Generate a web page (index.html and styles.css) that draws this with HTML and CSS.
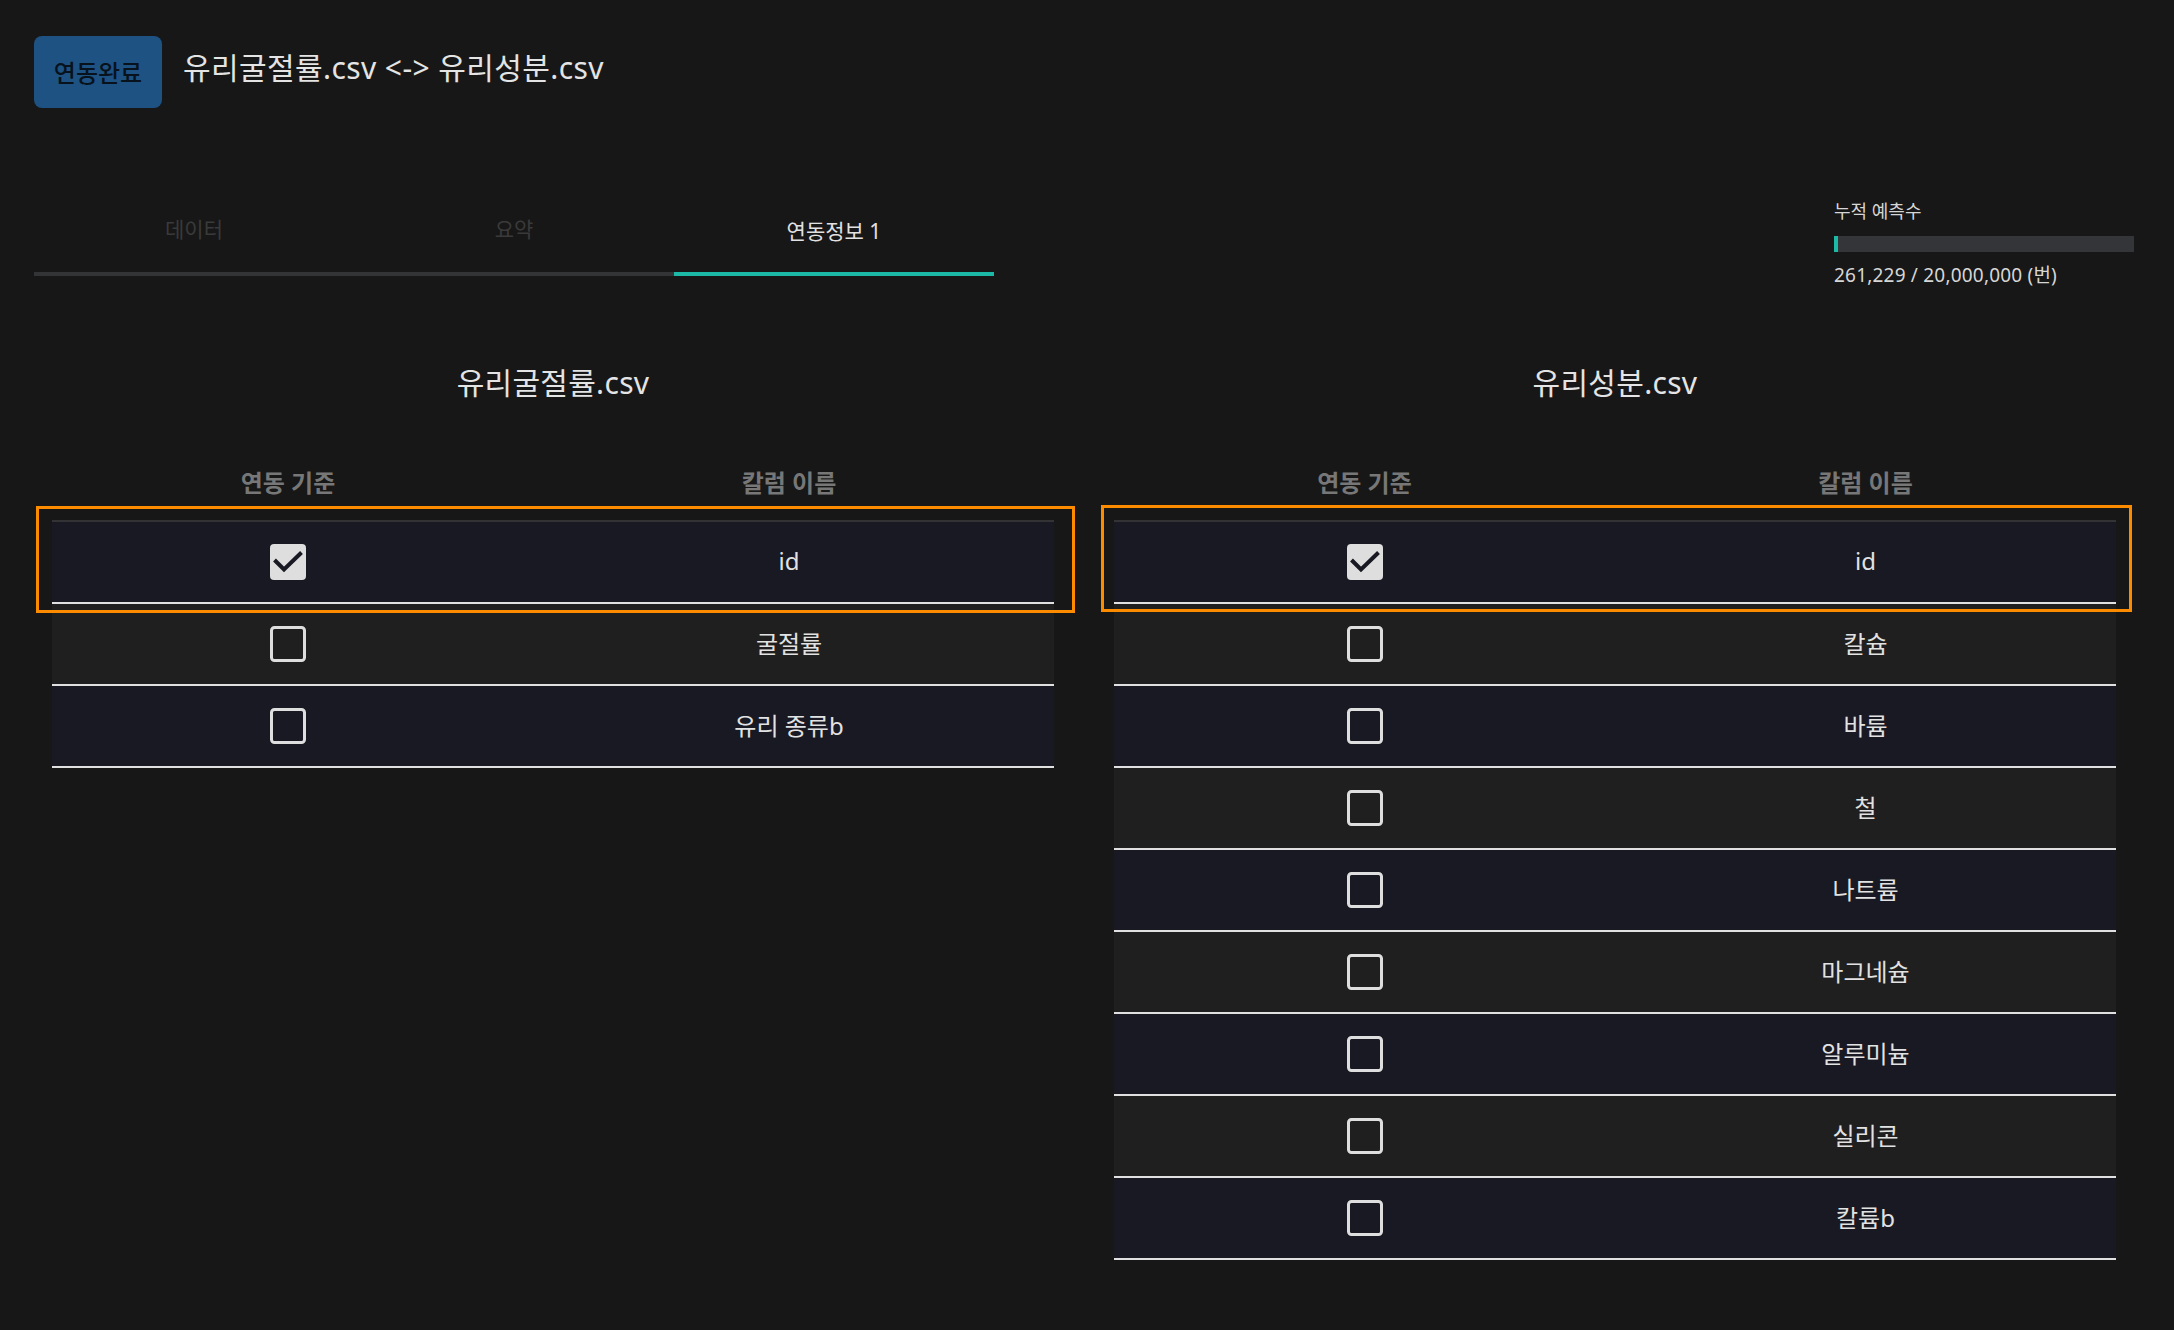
FILE: index.html
```html
<!DOCTYPE html>
<html lang="ko">
<head>
<meta charset="utf-8">
<title>연동정보</title>
<link rel="stylesheet" href="styles.css">
</head>
<body>
<header class="header">
  <div class="badge">연동완료</div>
  <div class="header-title">유리굴절률.csv &lt;-&gt; 유리성분.csv</div>
</header>

<div class="toolbar">
  <nav class="tabs">
    <div class="tab">데이터</div>
    <div class="tab">요약</div>
    <div class="tab tab--active">연동정보 1</div>
  </nav>
  <div class="stats">
    <div class="stats-label">누적 예측수</div>
    <div class="stats-bar"><div class="stats-fill" style="width:1.31%"></div></div>
    <div class="stats-value">261,229 / 20,000,000 (번)</div>
  </div>
</div>

<main class="panels">
  <section class="panel panel--left">
    <h2 class="panel-title">유리굴절률.csv</h2>
    <div class="grid head">
      <div class="cell">연동 기준</div>
      <div class="cell">칼럼 이름</div>
    </div>
    <div class="table">
      <div class="highlight"></div>
      <div class="grid row row--first">
        <div class="cell"><svg class="cb" viewBox="0 0 36 36"><rect x="0" y="0" width="36" height="36" rx="4" fill="#dedede"/><polyline points="4.5,16 14,25.5 31.5,8.5" fill="none" stroke="#181922" stroke-width="4"/></svg></div>
        <div class="cell txt">id</div>
      </div>
      <div class="grid row">
        <div class="cell"><svg class="cb" viewBox="0 0 36 36"><rect x="1.5" y="1.5" width="33" height="33" rx="3" fill="none" stroke="#dedede" stroke-width="3"/></svg></div>
        <div class="cell txt">굴절률</div>
      </div>
      <div class="grid row">
        <div class="cell"><svg class="cb" viewBox="0 0 36 36"><rect x="1.5" y="1.5" width="33" height="33" rx="3" fill="none" stroke="#dedede" stroke-width="3"/></svg></div>
        <div class="cell txt">유리 종류b</div>
      </div>
    </div>
  </section>

  <section class="panel panel--right">
    <h2 class="panel-title">유리성분.csv</h2>
    <div class="grid head">
      <div class="cell">연동 기준</div>
      <div class="cell">칼럼 이름</div>
    </div>
    <div class="table">
      <div class="highlight"></div>
      <div class="grid row row--first">
        <div class="cell"><svg class="cb" viewBox="0 0 36 36"><rect x="0" y="0" width="36" height="36" rx="4" fill="#dedede"/><polyline points="4.5,16 14,25.5 31.5,8.5" fill="none" stroke="#181922" stroke-width="4"/></svg></div>
        <div class="cell txt">id</div>
      </div>
      <div class="grid row">
        <div class="cell"><svg class="cb" viewBox="0 0 36 36"><rect x="1.5" y="1.5" width="33" height="33" rx="3" fill="none" stroke="#dedede" stroke-width="3"/></svg></div>
        <div class="cell txt">칼슘</div>
      </div>
      <div class="grid row">
        <div class="cell"><svg class="cb" viewBox="0 0 36 36"><rect x="1.5" y="1.5" width="33" height="33" rx="3" fill="none" stroke="#dedede" stroke-width="3"/></svg></div>
        <div class="cell txt">바륨</div>
      </div>
      <div class="grid row">
        <div class="cell"><svg class="cb" viewBox="0 0 36 36"><rect x="1.5" y="1.5" width="33" height="33" rx="3" fill="none" stroke="#dedede" stroke-width="3"/></svg></div>
        <div class="cell txt">철</div>
      </div>
      <div class="grid row">
        <div class="cell"><svg class="cb" viewBox="0 0 36 36"><rect x="1.5" y="1.5" width="33" height="33" rx="3" fill="none" stroke="#dedede" stroke-width="3"/></svg></div>
        <div class="cell txt">나트륨</div>
      </div>
      <div class="grid row">
        <div class="cell"><svg class="cb" viewBox="0 0 36 36"><rect x="1.5" y="1.5" width="33" height="33" rx="3" fill="none" stroke="#dedede" stroke-width="3"/></svg></div>
        <div class="cell txt">마그네슘</div>
      </div>
      <div class="grid row">
        <div class="cell"><svg class="cb" viewBox="0 0 36 36"><rect x="1.5" y="1.5" width="33" height="33" rx="3" fill="none" stroke="#dedede" stroke-width="3"/></svg></div>
        <div class="cell txt">알루미늄</div>
      </div>
      <div class="grid row">
        <div class="cell"><svg class="cb" viewBox="0 0 36 36"><rect x="1.5" y="1.5" width="33" height="33" rx="3" fill="none" stroke="#dedede" stroke-width="3"/></svg></div>
        <div class="cell txt">실리콘</div>
      </div>
      <div class="grid row">
        <div class="cell"><svg class="cb" viewBox="0 0 36 36"><rect x="1.5" y="1.5" width="33" height="33" rx="3" fill="none" stroke="#dedede" stroke-width="3"/></svg></div>
        <div class="cell txt">칼륨b</div>
      </div>
    </div>
  </section>
</main>
</body>
</html>
```

FILE: styles.css
```css
* { box-sizing: border-box; }

html, body {
  margin: 0;
  padding: 0;
  background: #171717;
  color: #e2e2e2;
  font-family: "Noto Sans", "Noto Sans CJK KR", sans-serif;
}

body {
  width: 2174px;
  min-height: 1330px;
}

/* Header */
.header {
  display: flex;
  align-items: center;
  gap: 21px;
  padding: 36px 0 0 34px;
}

.badge {
  width: 128px;
  height: 72px;
  border-radius: 8px;
  background: #1d5282;
  color: #08121c;
  font-size: 24px;
  font-weight: 500;
  display: flex;
  align-items: center;
  justify-content: center;
  padding-bottom: 2px;
}

.header-title {
  font-size: 30px;
  letter-spacing: 0.4px;
  color: #e4e4e4;
  line-height: 40px;
  padding-bottom: 9px;
}

/* Toolbar: tabs + stats */
.toolbar {
  display: flex;
  justify-content: space-between;
  align-items: flex-start;
  height: 100px;
  margin-top: 84px;
  padding: 0 40px 0 34px;
}

.tabs {
  display: flex;
  width: 960px;
  border-bottom: 4px solid #333436;
}

.tab {
  flex: 1;
  height: 80px;
  margin-bottom: -4px;
  border-bottom: 4px solid transparent;
  display: flex;
  align-items: center;
  justify-content: center;
  padding-bottom: 4px;
  font-size: 21px;
  color: #3a3a3a;
}

.tab--active {
  color: #e2e2e2;
  border-bottom-color: #1bb9a6;
  height: 84px;
}

.stats {
  width: 300px;
  padding-top: 7px;
  color: #d6d6d6;
}

.stats-label {
  font-size: 18px;
  line-height: 24px;
}

.stats-bar {
  margin-top: 13px;
  height: 16px;
  background: #343538;
}

.stats-fill {
  height: 100%;
  background: #1bb9a6;
}

.stats-value {
  margin-top: 11px;
  font-size: 19px;
  letter-spacing: 0.2px;
  line-height: 24px;
}

/* Panels */
.panels {
  display: flex;
  gap: 60px;
  padding: 0 58px 0 52px;
}

.panel {
  width: 1002px;
}

.panel-title {
  margin: 71px 0 0;
  font-size: 30px;
  font-weight: 400;
  letter-spacing: 0.3px;
  line-height: 40px;
  text-align: center;
  color: #e4e4e4;
}

.grid {
  display: grid;
  grid-template-columns: 1fr 1fr;
}

.panel--left .grid {
  grid-template-columns: 472px 1fr;
}

.cell {
  display: flex;
  align-items: center;
  justify-content: center;
}

.head {
  margin-top: 60px;
  height: 40px;
  padding-bottom: 3px;
  font-size: 24px;
  font-weight: 700;
  color: #777;
}

.table {
  position: relative;
  margin-top: 17px;
  border-top: 2px solid #333336;
}

.row {
  height: 82px;
  border-bottom: 2px solid #e0e0e0;
  font-size: 24px;
  color: #e2e2e2;
  background: #1f1f1f;
}

.row:nth-child(even) {
  background: #181922;
}

.txt {
  padding-bottom: 3px;
}

.cb {
  width: 36px;
  height: 36px;
  display: block;
}

.highlight {
  position: absolute;
  top: -17px;
  left: -13px;
  right: -16px;
  height: 107px;
  border: 3px solid #fd8b00;
  pointer-events: none;
  z-index: 2;
}

.panel--left .highlight {
  left: -16px;
  right: -21px;
  top: -16px;
}
```
